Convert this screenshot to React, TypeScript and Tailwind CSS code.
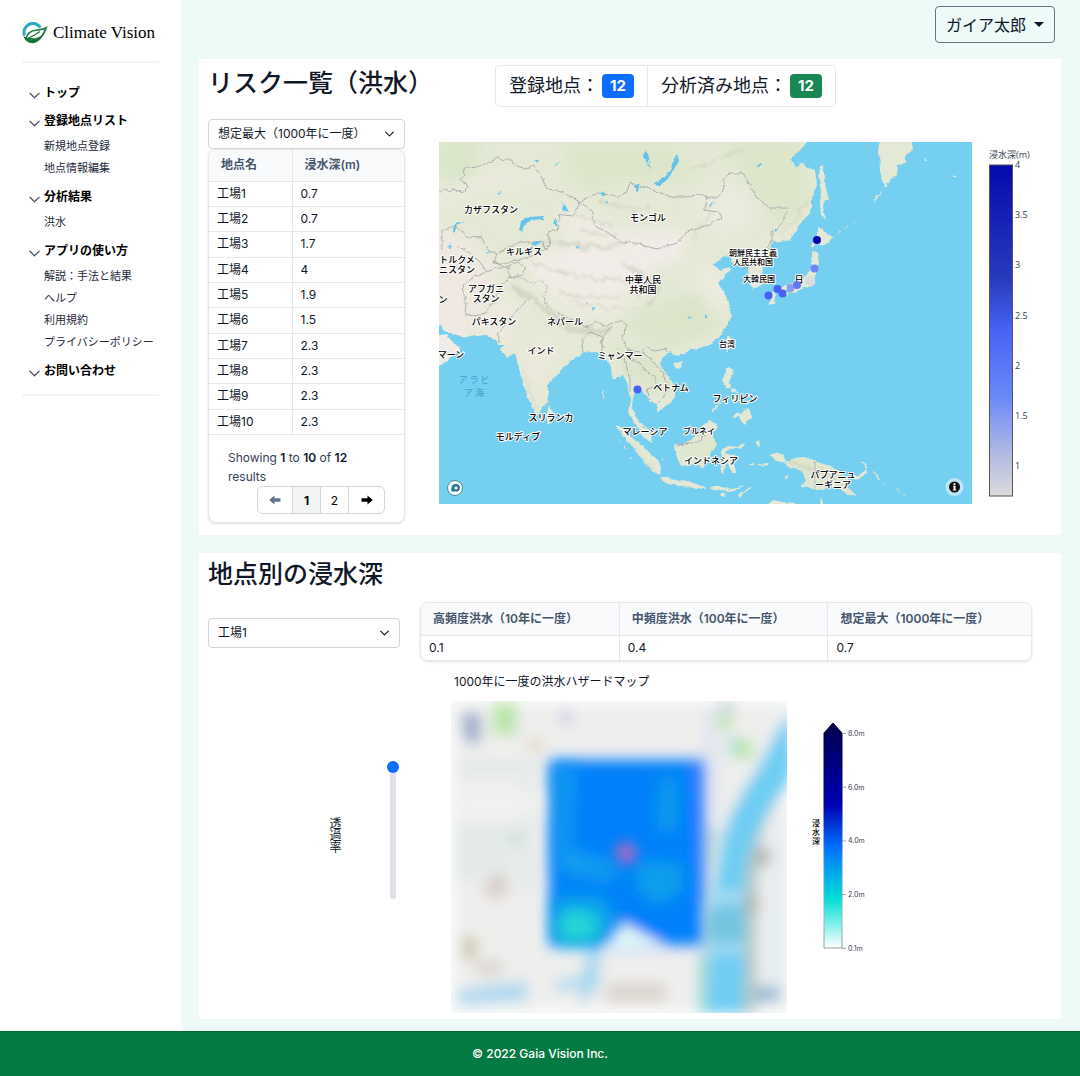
import { ReactNode } from "react";
import clsx from "clsx";

const menu = [
  { title: "トップ", items: [] },
  { title: "登録地点リスト", items: ["新規地点登録", "地点情報編集"] },
  { title: "分析結果", items: ["洪水"] },
  {
    title: "アプリの使い方",
    items: ["解説：手法と結果", "ヘルプ", "利用規約", "プライバシーポリシー"],
  },
  { title: "お問い合わせ", items: [] },
];

const sites = [
  { name: "工場1", depth: "0.7" },
  { name: "工場2", depth: "0.7" },
  { name: "工場3", depth: "1.7" },
  { name: "工場4", depth: "4" },
  { name: "工場5", depth: "1.9" },
  { name: "工場6", depth: "1.5" },
  { name: "工場7", depth: "2.3" },
  { name: "工場8", depth: "2.3" },
  { name: "工場9", depth: "2.3" },
  { name: "工場10", depth: "2.3" },
];

const depths = [
  { label: "高頻度洪水（10年に一度）", value: "0.1" },
  { label: "中頻度洪水（100年に一度）", value: "0.4" },
  { label: "想定最大（1000年に一度）", value: "0.7" },
];

const Logo = () => (
  <svg viewBox="0 0 26 22" className="h-[22px] w-[26px] shrink-0" aria-hidden="true">
    <path
      d="M2.5 13.5A9 9 0 0 1 18.5 5.5"
      fill="none"
      stroke="#2ba6c4"
      strokeWidth="3"
    />
    <path d="M1.5 14C3 20 9 22.5 14 20.5C17.5 19 20 16 20.5 12.5C18 16.5 13 18.5 8.5 17.5Z" fill="#11773a" />
    <path
      d="M4 17C5 10 10 8.5 15 8C19 7.5 22 7.2 24 6C22.5 10 20.5 16.5 13.5 17C9.5 17.3 7 16 4 17Z"
      fill="white"
      stroke="#11773a"
      strokeWidth="1.7"
    />
    <path d="M4 17.5C9 15 13 13 18 9.5" fill="none" stroke="#11773a" strokeWidth="1.2" />
  </svg>
);

const Chevron = ({ className }: { className: string }) => (
  <svg
    viewBox="0 0 12 7"
    fill="none"
    stroke="currentColor"
    strokeLinecap="round"
    strokeLinejoin="round"
    className={className}
    aria-hidden="true"
  >
    <path d="M1 1l5 5 5-5" />
  </svg>
);

const Sidebar = () => (
  <aside className="w-[181px] shrink-0 bg-white px-[22px] pt-[21px]">
    <a href="#" className="flex items-center gap-[5px] font-['Liberation_Serif',serif] text-[17px] leading-6 text-black">
      <Logo />
      <span className="whitespace-nowrap">Climate Vision</span>
    </a>
    <nav className="mt-4 space-y-2 border-y-2 border-gray-100 pt-5 pb-[13px]">
      {menu.map((group) => (
        <div key={group.title}>
          <button className="flex h-5 items-center gap-1 pl-[7px] text-xs font-semibold text-black">
            <Chevron className="mt-1 h-[7px] w-[11px] stroke-[1.3] text-gray-600" />
            {group.title}
          </button>
          {group.items.length > 0 && (
            <ul className="mt-1 pl-[22px]">
              {group.items.map((item) => (
                <li key={item} className="h-[22px] text-[11px] leading-[22px] whitespace-nowrap text-gray-800">
                  <a href="#">{item}</a>
                </li>
              ))}
            </ul>
          )}
        </div>
      ))}
    </nav>
  </aside>
);

const SelectBox = ({ label, options }: { label: string; options: string[] }) => (
  <div className="relative">
    <select
      aria-label={label}
      className="block w-full appearance-none rounded border border-gray-300 bg-white px-[9px] py-1 text-xs leading-5 text-gray-900"
    >
      {options.map((option) => (
        <option key={option}>{option}</option>
      ))}
    </select>
    <Chevron className="pointer-events-none absolute top-3 right-[11px] h-[6px] w-[9px] stroke-[1.5]" />
  </div>
);

const CountBadge = ({ label, children, color }: { label: string; children: ReactNode; color: string }) => (
  <div className="flex items-center px-[13px]">
    {label}
    <span className={clsx("ml-[3px] rounded px-2 text-[15px] leading-6 font-bold text-white", color)}>{children}</span>
  </div>
);

const Arrow = ({ className }: { className?: string }) => (
  <svg viewBox="0 0 12 10" className={clsx("h-[10px] w-3", className)} fill="currentColor" aria-hidden="true">
    <path d="M0.5 3.3H6.5V0.5L11.8 5L6.5 9.5V6.7H0.5Z" />
  </svg>
);

const SiteTable = () => (
  <div className="overflow-hidden rounded-lg border border-gray-200 bg-white shadow">
    <table className="h-[285px] w-full text-xs text-gray-900">
      <thead>
        <tr className="h-[31px] bg-gray-50 text-left text-slate-600">
          <th className="w-[83px] border-r border-b border-gray-200 pl-3 font-semibold">地点名</th>
          <th className="border-b border-gray-200 pl-3 font-semibold">浸水深(m)</th>
        </tr>
      </thead>
      <tbody>
        {sites.map((site) => (
          <tr key={site.name}>
            <td className="border-r border-b border-gray-200 pl-2">{site.name}</td>
            <td className="border-b border-gray-200 pl-2">{site.depth}</td>
          </tr>
        ))}
      </tbody>
    </table>
    <div className="px-[19px] pt-[13px] pb-2 text-xs leading-[19px] text-gray-700">
      <p className="pr-6">
        Showing <b className="font-semibold text-gray-900">1</b> to{" "}
        <b className="font-semibold text-gray-900">10</b> of <b className="font-semibold text-gray-900">12</b> results
      </p>
      <div className="ml-auto flex h-7 w-32 divide-x divide-gray-300 overflow-hidden rounded-md border border-gray-300 text-black">
        <button className="flex w-[35px] items-center justify-center text-slate-500" aria-label="前へ">
          <Arrow className="rotate-180" />
        </button>
        <button className="flex-1 bg-gray-100 font-bold">1</button>
        <button className="flex-1">2</button>
        <button className="flex w-[35px] items-center justify-center" aria-label="次へ">
          <Arrow />
        </button>
      </div>
    </div>
  </div>
);

const land = [
  // Eurasia
  "M430 130H815L807 142L800 150L790 160L797 168L800 163L807 167L815 170L817 185L812 198L812 207L806 217L800 224L790 240L780 242L774 241L767 250L760 256L756 260L762 268L765 282L752 289L750 278L748 270L743 262L736 266L731 261L735 254L725 256L713 265L720 270L732 268L722 278L718 283L725 295L730 307L731 320L720 335L710 345L700 348L690 350L678 356L670 352L662 358L661 367L669 377L675 387L675 398L666 406L657 412L657 404L650 402L645 394L640 391L634 394L632 403L633 410L638 420L647 427L650 435L653 443L643 437L637 427L632 419L628 413L630 400L627 383L623 375L612 379L611 367L602 353L593 352L583 353L570 361L557 375L549 382L549 392L547 402L537 415L530 403L522 380L515 353L508 357L500 350L504 345L498 345L497 341L487 335L467 337L450 333L443 330L442 325L430 328Z",
  "M430 334L447 335L452 342L460 348L456 353L447 360L430 375Z",
  "M549 405L555 415L553 422L548 423L546 416Z",
  "M673 364L678 361L683 361L680 367L676 369Z",
  "M728 336L731 338L730 347L727 352L724 345Z",
  "M725 369L728 367L733 369L732 378L729 383L731 388L726 388L723 383Z",
  "M731 388L736 390L740 393L737 393L732 391Z",
  "M733 395L738 397L742 403L736 400Z",
  "M732 418L736 413L742 415L744 410L749 408L752 418L748 420L745 425L741 421L739 416Z",
  "M711 412L720 402L722 402L713 412Z",
  "M675 444L682 445L690 440L697 434L704 425L710 420L718 427L713 433L713 438L717 445L712 449L708 459L703 467L694 465L683 466L677 457Z",
  "M615 425L622 428L630 436L643 445L650 454L658 461L661 467L660 475L654 472L643 461L633 448L623 435Z",
  "M660 477L668 477L677 481L686 480L693 483L703 486L707 489L693 488L683 487L672 484L663 482Z",
  "M722 448L728 446L738 447L745 443L743 448L730 449L725 453L731 455L737 454L732 459L735 468L737 473L732 473L728 464L725 465L724 474L721 473Z",
  "M770 455L777 452L784 455L782 458L788 462L795 458L803 457L817 462L833 467L843 474L848 480L848 488L857 496L851 496L843 491L835 487L829 486L824 490L816 490L808 487L801 485L806 481L803 472L797 469L790 468L785 463L777 461Z",
  "M850 477L858 476L866 469L867 472L859 479Z",
  "M862 462L868 468L866 468L861 463Z",
  "M875 472L880 479L878 479L874 473Z",
  "M883 482L886 485L884 485ZM896 488L902 492L898 491ZM903 493L907 497L904 496Z",
  "M738 495L748 488L753 487L744 493L740 497Z",
  "M720 493L726 494L725 497L719 495Z",
  "M710 487L722 487L732 489L745 486L735 491L712 490Z",
  "M749 465L753 464L754 466L750 466ZM757 464L768 463L770 466L758 465Z",
  "M756 443L759 440L760 446L757 453L759 448Z",
  "M785 476L788 474L786 480Z",
  "M767 506L774 500L782 502L795 503L800 506ZM820 506L821 497L824 506Z",
  "M617 438L620 441L618 441ZM624 446L626 449L624 448ZM630 455L632 459L630 458Z",
  "M662 457L664 459L662 461ZM667 461L669 463L667 463Z",
  "M603 391L604 391L603 399L602 397Z",
  // Sakhalin, Hokkaido, Honshu, Shikoku, Kyushu
  "M822 164L824 168L824 180L829 200L824 200L823 209L826 220L821 215L820 205L821 190L818 176Z",
  "M818 226L827 234L834 237L829 241L824 246L817 244L813 248L811 246L814 240L818 236Z",
  "M812 251L817 252L819 262L816 272L815 285L810 288L803 286L800 290L793 293L787 290L779 291L781 287L788 284L793 283L797 278L803 277L809 272L812 265Z",
  "M780 293L787 292L789 294L782 296Z",
  "M768 296L773 292L776 294L774 303L769 305L771 299Z",
  "M880 135L879 150L880 172L884 187L886 187L890 180L897 175L898 165L906 163L906 155L913 150L911 135Z",
  "M874 200L878 195L883 190L880 195L875 201Z",
  "M835 236L841 232L840 231ZM843 230L849 226L848 225ZM851 224L856 221L855 222Z",
  "M924 157L927 161L925 161ZM954 175L957 177L954 177Z",
].join("");

const borders = [
  "M439 192L446 190L450 191L456 189L463 192L468 187L466 183L459 180L465 176L464 168L470 168L480 166L490 162L498 158L506 160L512 160L513 164L520 167L528 169L533 165L540 174L547 189L556 190L563 193L571 197L580 202",
  "M580 202L573 216L564 215L560 214L557 230L548 232L550 246L545 248L542 241L533 242L520 242L507 248L497 254L488 250L482 238L468 237L455 225L442 231L442 250",
  "M497 254L493 262L500 264L510 262L522 259L532 256L548 248",
  "M493 262L505 267L520 262L525 270L523 275L510 277",
  "M456 246L470 252L480 262L487 272L497 268L508 268L510 277L503 284L497 295L492 304L485 313L476 316L465 315L466 303L462 286L473 277L487 272",
  "M580 202L590 197L597 193L611 195L620 197L627 192L630 182L640 188L647 187L660 193L673 197L685 197L697 194L708 198L717 198L724 190L723 179L730 173L743 173L750 185L757 198L770 208L787 208L784 220L778 228L772 232L772 242L761 252",
  "M580 202L591 210L596 227L610 233L620 242L636 243L657 249L677 243L687 232L700 228L712 223L722 217L718 212L704 210L708 198",
  "M530 298L518 309L508 322L498 333L500 343",
  "M557 312L573 321L587 327L595 322L607 326L620 320L627 325L622 338L628 350L640 352L647 347L655 351L665 349L669 352",
  "M583 353L582 340L590 332L602 337L602 353",
  "M612 326L600 342L605 348",
  "M642 352L652 360L663 374L668 388L663 398L658 403",
  "M628 350L625 362L630 376L630 392",
  "M628 360L640 362L645 370L656 378L656 387L647 389L650 400",
  "M677 445L690 443L700 442L707 430",
  "M815 462V490",
  "M745 268L752 266L757 265M642 427L647 428",
];

const mapLabels = [
  { x: 491, y: 209, lines: ["カザフスタン"] },
  { x: 648, y: 217, lines: ["モンゴル"] },
  { x: 524, y: 251, lines: ["キルギス"] },
  { x: 457, y: 259, lines: ["トルクメ", "ニスタン"] },
  { x: 486, y: 288, lines: ["アフガニ", "スタン"] },
  { x: 443, y: 299, lines: ["ン"] },
  { x: 494, y: 321, lines: ["パキスタン"] },
  { x: 565, y: 321, lines: ["ネパール"] },
  { x: 643, y: 279, lines: ["中華人民", "共和国"] },
  { x: 541, y: 350, lines: ["インド"] },
  { x: 620, y: 355, lines: ["ミャンマー"] },
  { x: 671, y: 387, lines: ["ベトナム"] },
  { x: 451, y: 354, lines: ["マーン"] },
  { x: 551, y: 417, lines: ["スリランカ"] },
  { x: 518, y: 436, lines: ["モルディブ"] },
  { x: 645, y: 431, lines: ["マレーシア"] },
  { x: 711, y: 460, lines: ["インドネシア"] },
  { x: 735, y: 398, lines: ["フィリピン"] },
  { x: 833, y: 474, lines: ["パプアニュ", "ーギニア"] },
  { x: 799, y: 279, lines: ["日"] },
];

const smallLabels = [
  { x: 753, y: 252, lines: ["朝鮮民主主義", "人民共和国"] },
  { x: 759, y: 278, lines: ["大韓民国"] },
  { x: 727, y: 343, lines: ["台湾"] },
  { x: 699, y: 430, lines: ["ブルネイ"] },
];

const points = [
  { x: 810, y: 281, r: 5, fill: "#dcdcdc" },
  { x: 817, y: 240, r: 4, fill: "#0508a8" },
  { x: 814.5, y: 268.5, r: 4, fill: "#6d85f5" },
  { x: 790.5, y: 288, r: 4, fill: "#8a9bf0" },
  { x: 797, y: 285, r: 4, fill: "#6078f3" },
  { x: 777.5, y: 289, r: 4, fill: "#4662f3" },
  { x: 782.5, y: 293.5, r: 4, fill: "#4662f3" },
  { x: 768.5, y: 295.5, r: 4, fill: "#4662f3" },
  { x: 637.5, y: 389.5, r: 4, fill: "#4662f3" },
];

type Label = { x: number; y: number; lines: string[] };

const MapLabel = ({ label, size }: { label: Label; size: number }) => (
  <text x={label.x} y={label.y} fontSize={size}>
    {label.lines.map((line, i) => (
      <tspan key={line} x={label.x} dy={i * (size + 1)}>
        {line}
      </tspan>
    ))}
  </text>
);

const RiskMap = () => (
  <svg
    viewBox="439 142 533 362"
    preserveAspectRatio="xMidYMid slice"
    className="h-[362px] min-w-0 flex-1 bg-[#75cff0] font-['Noto_Sans_CJK_JP',sans-serif]"
    role="img"
    aria-label="登録地点の浸水深マップ"
  >
    <defs>
      <filter id="coast" x="-5%" y="-5%" width="110%" height="110%">
        <feTurbulence type="fractalNoise" baseFrequency="0.18" numOctaves="3" seed="4" />
        <feDisplacementMap in="SourceGraphic" scale="4" xChannelSelector="R" yChannelSelector="G" />
      </filter>
      <filter id="soft" x="-30%" y="-30%" width="160%" height="160%">
        <feGaussianBlur stdDeviation="7" />
      </filter>
      <filter id="ridge" x="-20%" y="-20%" width="140%" height="140%">
        <feTurbulence type="fractalNoise" baseFrequency="0.08" numOctaves="3" seed="9" />
        <feDisplacementMap in="SourceGraphic" scale="12" xChannelSelector="R" yChannelSelector="G" />
        <feGaussianBlur stdDeviation="0.8" />
      </filter>
      <clipPath id="land-clip">
        <path d={land} />
      </clipPath>
    </defs>

    <g filter="url(#coast)">
      <path d={land} fill="#e4e9d5" />
      <g clipPath="url(#land-clip)">
        <g filter="url(#soft)">
          <path d="M430 200L480 172L540 172L545 185L480 190L440 210Z" fill="#eceade" />
          <path d="M430 225L470 240L500 270L470 340L430 340Z" fill="#efe9e1" />
          <path d="M525 262L570 245L640 246L690 232L680 260L650 270L640 290L600 300L560 300L535 280Z" fill="#f2ece8" />
          <path d="M570 205L600 222L620 232L680 228L670 245L620 245L560 235Z" fill="#f0ebe5" />
          <path d="M545 285L600 290L640 310L590 318L555 305Z" fill="#eeebe2" />
          <path d="M485 320L510 290L520 310L505 345L480 335Z" fill="#efeae2" />
          <path d="M430 335H465V370H430Z" fill="#f1ece8" />
          <path d="M520 335L560 335L560 360L535 400L520 370Z" fill="#eae9dc" />
          <path d="M690 200L740 185L760 215L720 240Z" fill="#ebebdf" />
          <path d="M700 260L730 285L725 310L690 300Z" fill="#ecebdf" />
          <path d="M439 142H480L470 180H439Z" fill="#d9e6c8" />
          <path d="M560 142H670L700 180L640 180L580 190Z" fill="#dde6cb" />
          <path d="M720 142H800L810 200L780 230L740 170Z" fill="#dde5cb" />
          <path d="M620 320L700 290L720 330L660 350Z" fill="#dbe5ca" />
          <path d="M610 340L660 360L670 400L640 390Z" fill="#dce5cb" />
          <path d="M680 430H720V470H680ZM780 455H860V500H780Z" fill="#dfe6cf" />
        </g>
        <g filter="url(#ridge)" fill="none" stroke="#c9ccb7" opacity="0.6">
          <path d="M512 287Q535 298 556 318T610 328" strokeWidth="6" />
          <path d="M540 246Q565 240 590 246T628 240" strokeWidth="2.5" />
          <path d="M575 212Q592 222 612 226M580 228Q600 238 620 234M560 240L590 250" strokeWidth="2" />
          <path d="M530 262Q560 276 600 278T640 296" strokeWidth="2" />
          <path d="M618 262Q640 270 650 284M650 305Q662 290 655 275" strokeWidth="3" />
          <path d="M570 300Q600 312 640 308M560 292Q590 300 620 296" strokeWidth="1.5" />
          <path d="M690 240Q705 220 715 200M780 235Q800 215 806 200" strokeWidth="1.5" />
          <path d="M600 200Q630 215 650 205M690 170Q720 160 740 150" strokeWidth="1.5" />
          <path d="M618 345Q622 360 628 375M660 365Q668 380 672 392" strokeWidth="1.5" />
          <path d="M790 464Q815 466 845 485" strokeWidth="3" />
          <path d="M522 370Q526 390 534 408M625 440Q640 452 655 470" strokeWidth="1.5" />
        </g>
      </g>
      <g fill="none" stroke="#a9a9aa" strokeWidth="0.9" strokeLinejoin="round">
        {borders.map((d) => (
          <path key={d} d={d} />
        ))}
        <path d="M510 277L522 278L533 284L540 280L548 286L544 296L545 304L557 312L566 318" strokeDasharray="2 1.5" />
      </g>
      <g fill="#62c3ec">
        <path d="M677 154L679 161L674 170L667 180L660 185L653 184L663 178L671 168L674 158Z" />
        <path d="M519 231L521 221L530 217L544 216V219L531 220L524 225L522 232Z" />
        <path d="M531 244L538 241L540 243L535 246ZM554 219L557 223V226L553 223ZM561 202L566 206L568 212L561 208L563 205Z" />
        <path d="M601 193L605 192V196L602 196ZM636 185L639 184L638 192L636 191ZM606 200L609 202L606 203Z" />
        <path d="M645 150L649 157L650 172L648 162L643 156ZM553 167L561 161L558 165ZM535 160L539 160L537 163ZM497 193L502 191L499 195Z" />
        <path d="M452 230L455 224L464 222L457 226L453 234ZM447 247L451 244L450 249ZM486 252L493 253L488 254Z" />
        <path d="M756 165L762 163L759 167ZM709 206L713 201L711 206ZM775 229L779 228L776 232ZM575 247L580 246L577 249Z" />
        <path d="M586 302L588 303L587 305ZM592 307L596 308L593 310ZM688 316L692 317L689 319ZM705 314L708 318L705 318Z" />
      </g>
    </g>

    <g
      textAnchor="middle"
      dominantBaseline="central"
      className="fill-black stroke-white font-medium"
      strokeWidth="2"
      strokeLinejoin="round"
      paintOrder="stroke"
    >
      {mapLabels.map((label) => (
        <MapLabel key={label.lines[0]} label={label} size={9} />
      ))}
      {smallLabels.map((label) => (
        <MapLabel key={label.lines[0]} label={label} size={8} />
      ))}
    </g>
    <g textAnchor="middle" dominantBaseline="central" fontSize="9" fill="#3da4cf">
      <text x="474" y="379">ア ラ ビ</text>
      <text x="474" y="392">ア 海</text>
    </g>

    {points.map((point) => (
      <circle key={`${point.x}-${point.y}`} cx={point.x} cy={point.y} r={point.r} fill={point.fill} />
    ))}

    <circle cx="455" cy="488" r="7.5" fill="white" stroke="#4a8ba3" strokeWidth="1" />
    <path d="M451.5 491.5C450.5 486 453 484 455.5 484A3.8 3.8 0 1 1 455.5 491.5Z" fill="#26758f" />
    <path d="M456 485.5L456.7 487.3L458.5 488L456.7 488.7L456 490.5L455.3 488.7L453.5 488L455.3 487.3Z" fill="white" />
    <circle cx="954.5" cy="487" r="9" fill="#bde7f7" />
    <circle cx="954.5" cy="487" r="5.5" fill="#111" />
    <path d="M953 485.8H955.5V489.5H956.3V490.5H952.8V489.5H953.6V486.8H953ZM953.5 483.3H955.5V484.9H953.5Z" fill="white" />
  </svg>
);

const riskTicks = ["4", "3.5", "3", "2.5", "2", "1.5", "1"];

const RiskLegend = () => (
  <svg viewBox="0 0 44 362" className="h-[362px] w-11 shrink-0 font-['Open_Sans','Noto_Sans_CJK_JP',sans-serif]" role="img" aria-label="浸水深(m)">
    <defs>
      <linearGradient id="risk-scale" x1="0" y1="0" x2="0" y2="1">
        <stop offset="0" stopColor="#050aac" />
        <stop offset="0.35" stopColor="#283cbe" />
        <stop offset="0.5" stopColor="#4663f5" />
        <stop offset="0.7" stopColor="#6a89f7" />
        <stop offset="0.88" stopColor="#b4bce2" />
        <stop offset="1" stopColor="#dcdcdc" />
      </linearGradient>
    </defs>
    <text x="0" y="16" fontSize="9" className="fill-gray-700">
      浸水深(m)
    </text>
    <rect x="0.5" y="23" width="23" height="331" fill="url(#risk-scale)" stroke="#555" />
    {riskTicks.map((tick, i) => (
      <text key={tick} x="26" y={26 + i * 50.2} fontSize="9" className="fill-gray-700">
        {tick}
      </text>
    ))}
  </svg>
);

const HazardMap = () => (
  <svg
    viewBox="0 0 336 312"
    className="h-[312px] w-[336px]"
    role="img"
    aria-label="1000年に一度の洪水ハザードマップ"
  >
    <defs>
      <filter id="haze" filterUnits="userSpaceOnUse" x="-30" y="-30" width="396" height="372">
        <feGaussianBlur stdDeviation="6.5" />
      </filter>
      <filter id="wide-haze" filterUnits="userSpaceOnUse" x="-30" y="-30" width="396" height="372">
        <feGaussianBlur stdDeviation="9" />
      </filter>
    </defs>
    <rect width="336" height="312" fill="#f8faf9" />
    <g filter="url(#haze)">
      <rect x="5" y="5" width="326" height="302" fill="#eeeeed" />
      <path d="M5 60H90V76H5ZM66 80H84V190H66ZM5 120H60V180H5Z" fill="#e4eae9" />
      <path d="M250 5H270V120H250Z" fill="#e3e7ee" />
      <path d="M10 12H30V42H14Z" fill="#9eafcd" />
      <path d="M42 2H66V34H42Z" fill="#bbe6ab" />
      <path d="M108 10H122V22H108Z" fill="#cfcde8" />
      <path d="M78 38H90V50H78Z" fill="#e0d5bb" />
      <path d="M266 14H282V28H266ZM284 38H302V58H284Z" fill="#bfe6ae" />
      <path d="M278 35H286V55H278Z" fill="#a9dcdf" />
      <path d="M268 2H284V10H268Z" fill="#bcc9d8" />
      <path d="M36 178L52 170L58 195L34 198Z" fill="#d8cfc8" />
      <path d="M12 236H26V258H12Z" fill="#cbc8ab" />
      <path d="M24 260H52V274H24ZM155 282H215V302H155Z" fill="#dcd6d0" />
      <path d="M6 290L36 284L76 280V300L8 304Z" fill="#b1d9f0" />
      <path d="M58 130H72V145H58Z" fill="#cfe0db" />
      <path d="M336 70L312 130L306 190V312H280V160Z" fill="#b4cac8" />
      <path d="M336 100L320 150L314 220V300L336 305Z" fill="#e6edf0" />
      <path d="M306 148L322 148L316 165L300 165ZM292 194H308V212H292Z" fill="#b2b6b0" />
      <path d="M250 120L268 130L258 180V312H248Z" fill="#b9d8d8" />
      <path d="M340 8L322 38C308 72 280 100 271 140L262 190L256 312H293L295 170C301 130 326 104 342 70Z" fill="#70cdf3" />
      <path d="M254 190H294V202H254ZM254 243H294V252H254Z" fill="#a9dbf1" />
      <path d="M256 208H292V240H256Z" fill="#74c5de" />
      <path d="M247 256H254V312H247Z" fill="#8fdcd2" />
      <path d="M304 286H328V300H304Z" fill="#8fb4d2" />
      <path d="M136 240H150L148 285L128 305L130 285L105 290V280L132 275Z" fill="#a7d7f0" />
      <path d="M97 54H255V250H97Z" fill="#a9c5ff" opacity="0.5" />
    </g>
    <g filter="url(#haze)">
      <path d="M99 60H250V243H214L174 222L152 243H99Z" fill="#0080fa" />
      <path d="M240 60H252V200H247L243 100Z" fill="#2f78ff" />
      <path d="M170 222L212 246L158 250Z" fill="#dff6f6" />
    </g>
    <g filter="url(#wide-haze)">
      <path d="M106 66H122L118 150L165 163V180L108 170Z" fill="#14a4ec" />
      <path d="M106 196H150L165 215L146 238H106Z" fill="#08a8e8" />
      <path d="M106 212H140L156 228L146 242H104Z" fill="#1bd0d6" />
      <path d="M184 160L232 162V190L205 206L186 190ZM210 76H226V130H206Z" fill="#0aa0ea" />
    </g>
    <path d="M114 216H134V232H114Z" fill="#2fdcd8" filter="url(#wide-haze)" />
    <circle cx="175" cy="152" r="11" fill="#a06cc8" filter="url(#haze)" />
    <rect x="8" y="90" width="80" height="25" fill="#f3f2f2" filter="url(#wide-haze)" />
  </svg>
);

const hazardTicks = ["8.0m", "6.0m", "4.0m", "2.0m", "0.1m"];

const HazardLegend = () => (
  <svg viewBox="0 0 60 236" className="h-[236px] w-[60px] font-['Inter','Noto_Sans_CJK_JP',sans-serif]" role="img" aria-label="浸水深の凡例">
    <defs>
      <linearGradient id="hazard-scale" x1="0" y1="0" x2="0" y2="1">
        <stop offset="0" stopColor="#00004c" />
        <stop offset="0.3" stopColor="#0000a4" />
        <stop offset="0.36" stopColor="#0000b4" />
        <stop offset="0.55" stopColor="#0070ff" />
        <stop offset="0.78" stopColor="#00e0d8" />
        <stop offset="0.8" stopColor="#14e2d8" />
        <stop offset="1" stopColor="#ffffff" />
      </linearGradient>
      <linearGradient id="hazard-edge" gradientUnits="userSpaceOnUse" x1="0" y1="0" x2="0" y2="230">
        <stop offset="0" stopColor="#000020" />
        <stop offset="0.35" stopColor="#00007c" />
        <stop offset="0.6" stopColor="#4a90e0" />
        <stop offset="0.85" stopColor="#9ab8b8" />
        <stop offset="1" stopColor="#999999" />
      </linearGradient>
    </defs>
    <path d="M13 12L22 2L31 12V227H13Z" fill="url(#hazard-scale)" stroke="url(#hazard-edge)" />
    {["浸", "水", "深"].map((char, i) => (
      <text key={char} x="1" y={105 + i * 9} fontSize="8" className="fill-black font-medium">
        {char}
      </text>
    ))}
    {hazardTicks.map((tick, i) => (
      <g key={tick}>
        <path d={`M31 ${12.5 + i * 53.7}h4`} stroke="#888" strokeWidth="0.8" />
        <text x="37" y={15 + i * 53.7} fontSize="7" className="fill-gray-700">
          {tick}
        </text>
      </g>
    ))}
  </svg>
);

const App = () => {
  return (
    <div className="flex min-h-screen flex-col font-['Inter','Noto_Sans_CJK_JP',sans-serif] text-gray-900">
      <div className="flex flex-1">
        <Sidebar />
        <main className="min-w-0 flex-1 bg-[#edfaf7] pr-[19px] pb-3 pl-[18px]">
          <div className="flex h-[59px] justify-end pt-[6px] pr-[6px]">
            <button className="flex h-[37px] w-[120px] items-center justify-center gap-2 rounded border border-gray-500 text-base">
              ガイア太郎
              <svg viewBox="0 0 10 5" className="h-[5px] w-[10px]" fill="currentColor" aria-hidden="true">
                <path d="M0 0H10L5 5Z" />
              </svg>
            </button>
          </div>

          <section className="bg-white pt-[6px] pr-7 pb-3 pl-[9px]">
            <div className="flex items-start">
              <h1 className="w-[287px] shrink-0 text-[25px] leading-9 font-medium whitespace-nowrap">リスク一覧（洪水）</h1>
              <div className="flex h-[42px] divide-x divide-gray-200 rounded border border-gray-200 text-lg whitespace-nowrap">
                <CountBadge label="登録地点：" color="bg-[#0d6efd]">
                  12
                </CountBadge>
                <CountBadge label="分析済み地点：" color="bg-[#198754]">
                  12
                </CountBadge>
              </div>
            </div>
            <div className="mt-3 flex items-start">
              <div className="w-[197px] shrink-0">
                <SelectBox label="洪水頻度" options={["想定最大（1000年に一度）"]} />
                <SiteTable />
              </div>
              <div className="mt-[23px] ml-[34px] flex min-w-0 flex-1 gap-[17px]">
                <RiskMap />
                <RiskLegend />
              </div>
            </div>
          </section>

          <section className="mt-[18px] bg-white pt-[3px] pr-[29px] pb-[6px] pl-[9px]">
            <h2 className="text-[25px] leading-9 font-medium">地点別の浸水深</h2>
            <div className="mt-[10px] flex items-start gap-5">
              <div className="w-48 shrink-0 pt-4">
                <SelectBox label="地点" options={sites.map((site) => site.name)} />
                <div className="mt-[113px] flex items-center justify-end gap-11 text-xs">
                  <label htmlFor="opacity" className="pt-[10px] leading-4 [writing-mode:vertical-rl]">
                    透過率
                  </label>
                  <input
                    id="opacity"
                    type="range"
                    defaultValue={100}
                    className="h-[138px] w-[14px] appearance-none bg-transparent [direction:rtl] [writing-mode:vertical-lr] [&::-webkit-slider-runnable-track]:w-[6px] [&::-webkit-slider-runnable-track]:rounded-full [&::-webkit-slider-runnable-track]:bg-[#dee2e6] [&::-webkit-slider-thumb]:-ml-[3px] [&::-webkit-slider-thumb]:size-3 [&::-webkit-slider-thumb]:appearance-none [&::-webkit-slider-thumb]:rounded-full [&::-webkit-slider-thumb]:bg-[#0d6efd]"
                  />
                </div>
              </div>
              <div className="min-w-0 flex-1">
                <div className="overflow-hidden rounded-lg border border-gray-200 shadow">
                  <table className="w-full text-xs text-gray-900">
                    <thead>
                      <tr className="h-8 bg-gray-50 text-left text-slate-600">
                        {depths.map((depth) => (
                          <th key={depth.label} className="border-r border-b border-gray-200 pl-3 font-semibold last:border-r-0">
                            {depth.label}
                          </th>
                        ))}
                      </tr>
                    </thead>
                    <tbody>
                      <tr className="h-[25px]">
                        {depths.map((depth) => (
                          <td key={depth.label} className="border-r border-gray-200 pl-2 last:border-r-0">
                            {depth.value}
                          </td>
                        ))}
                      </tr>
                    </tbody>
                  </table>
                </div>
                <p className="mt-3 pl-[34px] text-xs leading-[18px]">1000年に一度の洪水ハザードマップ</p>
                <div className="mt-[10px] flex items-start gap-6 pl-[31px]">
                  <HazardMap />
                  <div className="pt-5">
                    <HazardLegend />
                  </div>
                </div>
              </div>
            </div>
          </section>
        </main>
      </div>
      <footer className="border-t border-green-900/40 bg-[#047b42] pt-3 pb-[14px] text-center text-xs leading-[19px] font-medium text-white">
        © 2022 Gaia Vision Inc.
      </footer>
    </div>
  );
};

export default App;
